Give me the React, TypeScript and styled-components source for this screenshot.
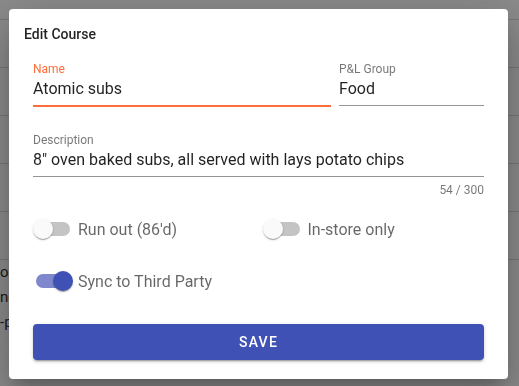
import { useState } from "react";
import styled, { createGlobalStyle } from "styled-components";

const GlobalStyle = createGlobalStyle`
  html, body {
    margin: 0;
    height: 100%;
    overflow: hidden;
  }
  body {
    font-family: Roboto, "Noto Sans", sans-serif;
    background: #fff;
  }
  * {
    box-sizing: border-box;
  }
`;

const Page = styled.div`
  height: 386px;
  overflow: hidden;
  color: #333;
`;

const ListRow = styled.div<{ $first?: boolean }>`
  height: ${(p) => (p.$first ? 20 : 48)}px;
  border-bottom: 1px solid rgba(0, 0, 0, 0.14);
`;

const NoteLine = styled.div`
  font-size: 15px;
  line-height: 25px;
  white-space: nowrap;
  &:first-of-type {
    margin-top: 12px;
  }
`;

const Backdrop = styled.div`
  position: fixed;
  inset: 0;
  background: rgba(0, 0, 0, 0.46);
  padding: 9px;
`;

const Dialog = styled.div`
  width: 499px;
  background: #fff;
  border-radius: 4px;
  box-shadow: 0px 11px 15px -7px rgba(0, 0, 0, 0.2),
    0px 24px 38px 3px rgba(0, 0, 0, 0.14), 0px 9px 46px 8px rgba(0, 0, 0, 0.12);
`;

const Title = styled.h2`
  margin: 0;
  padding: 15px 16px 0 15px;
  font-size: 14px;
  line-height: 20px;
  font-weight: 500;
  color: rgba(0, 0, 0, 0.87);
`;

const Body = styled.div`
  padding: 18px 24px 19px;
  display: flex;
  flex-direction: column;
`;

const FieldRow = styled.div`
  display: grid;
  grid-template-columns: 1fr 145px;
  column-gap: 8px;
`;

const Field = styled.label<{ $gap?: number }>`
  display: flex;
  flex-direction: column;
  margin-top: ${(p) => p.$gap ?? 0}px;
`;

const FieldLabel = styled.span<{ $focused?: boolean }>`
  font-size: 12px;
  line-height: 14px;
  margin-bottom: 3px;
  color: ${(p) => (p.$focused ? "#ff6d3a" : "rgba(0, 0, 0, 0.54)")};
`;

const FieldInput = styled.input<{ $focused?: boolean }>`
  width: 100%;
  height: ${(p) => (p.$focused ? 28 : 27)}px;
  margin: 0;
  padding: 0 0 7px;
  border: none;
  border-bottom: ${(p) =>
    p.$focused ? "2px solid #ff6d3a" : "1px solid rgba(0, 0, 0, 0.42)"};
  outline: none;
  background: transparent;
  font-family: inherit;
  font-size: 16px;
  line-height: 19px;
  color: rgba(0, 0, 0, 0.87);
`;

const Counter = styled.div`
  margin-top: 6px;
  text-align: right;
  font-size: 12px;
  line-height: 14px;
  color: rgba(0, 0, 0, 0.54);
`;

const Toggles = styled.div`
  margin-top: 13px;
  display: grid;
  grid-template-columns: 1fr 1fr;
  column-gap: 8px;
  row-gap: 14px;
`;

const ToggleItem = styled.label`
  display: flex;
  align-items: center;
  gap: 5px;
  height: 38px;
  font-size: 16px;
  color: rgba(0, 0, 0, 0.6);
  cursor: pointer;
  user-select: none;
`;

const SwitchBox = styled.span`
  position: relative;
  flex: none;
  width: 40px;
  height: 20px;
`;

const Track = styled.span<{ $on: boolean }>`
  display: block;
  margin: 3px;
  width: 34px;
  height: 14px;
  border-radius: 7px;
  background: ${(p) => (p.$on ? "#7f88cd" : "#c4c4c4")};
`;

const Thumb = styled.span<{ $on: boolean }>`
  position: absolute;
  top: 0;
  left: ${(p) => (p.$on ? 20 : 0)}px;
  width: 20px;
  height: 20px;
  border-radius: 50%;
  background: ${(p) => (p.$on ? "#3f51b5" : "#fafafa")};
  box-shadow: 0px 2px 1px -1px rgba(0, 0, 0, 0.2),
    0px 1px 1px 0px rgba(0, 0, 0, 0.14), 0px 1px 3px 0px rgba(0, 0, 0, 0.12);
  transition: left 150ms;
`;

const SaveButton = styled.button`
  margin-top: 24px;
  height: 36px;
  border: none;
  border-radius: 4px;
  background: #3f51b5;
  color: #fff;
  font-family: inherit;
  font-size: 14px;
  font-weight: 500;
  letter-spacing: 1.25px;
  text-transform: uppercase;
  box-shadow: 0px 3px 1px -2px rgba(0, 0, 0, 0.2),
    0px 2px 2px 0px rgba(0, 0, 0, 0.14), 0px 1px 5px 0px rgba(0, 0, 0, 0.12);
  cursor: pointer;
`;

function Toggle({ label, on, onChange }: { label: string; on: boolean; onChange: () => void }) {
  return (
    <ToggleItem onClick={onChange}>
      <SwitchBox>
        <Track $on={on} />
        <Thumb $on={on} />
      </SwitchBox>
      {label}
    </ToggleItem>
  );
}

function App() {
  const [flags, setFlags] = useState({ runOut: false, inStore: false, sync: true });
  const flip = (key: keyof typeof flags) => setFlags({ ...flags, [key]: !flags[key] });

  return (
    <>
      <GlobalStyle />
      <Page>
        <ListRow $first />
        <ListRow />
        <ListRow />
        <ListRow />
        <ListRow />
        <ListRow />
        <NoteLine>olives</NoteLine>
        <NoteLine>nchos</NoteLine>
        <NoteLine>-pickles</NoteLine>
      </Page>
      <Backdrop>
        <Dialog>
          <Title>Edit Course</Title>
          <Body>
            <FieldRow>
              <Field>
                <FieldLabel $focused>Name</FieldLabel>
                <FieldInput $focused defaultValue="Atomic subs" />
              </Field>
              <Field>
                <FieldLabel>P&amp;L Group</FieldLabel>
                <FieldInput defaultValue="Food" />
              </Field>
            </FieldRow>
            <Field $gap={26}>
              <FieldLabel>Description</FieldLabel>
              <FieldInput defaultValue={"8\" oven baked subs, all served with lays potato chips"} />
            </Field>
            <Counter>54 / 300</Counter>
            <Toggles>
              <Toggle label="Run out (86'd)" on={flags.runOut} onChange={() => flip("runOut")} />
              <Toggle label="In-store only" on={flags.inStore} onChange={() => flip("inStore")} />
              <Toggle label="Sync to Third Party" on={flags.sync} onChange={() => flip("sync")} />
            </Toggles>
            <SaveButton>Save</SaveButton>
          </Body>
        </Dialog>
      </Backdrop>
    </>
  );
}

export default App;
